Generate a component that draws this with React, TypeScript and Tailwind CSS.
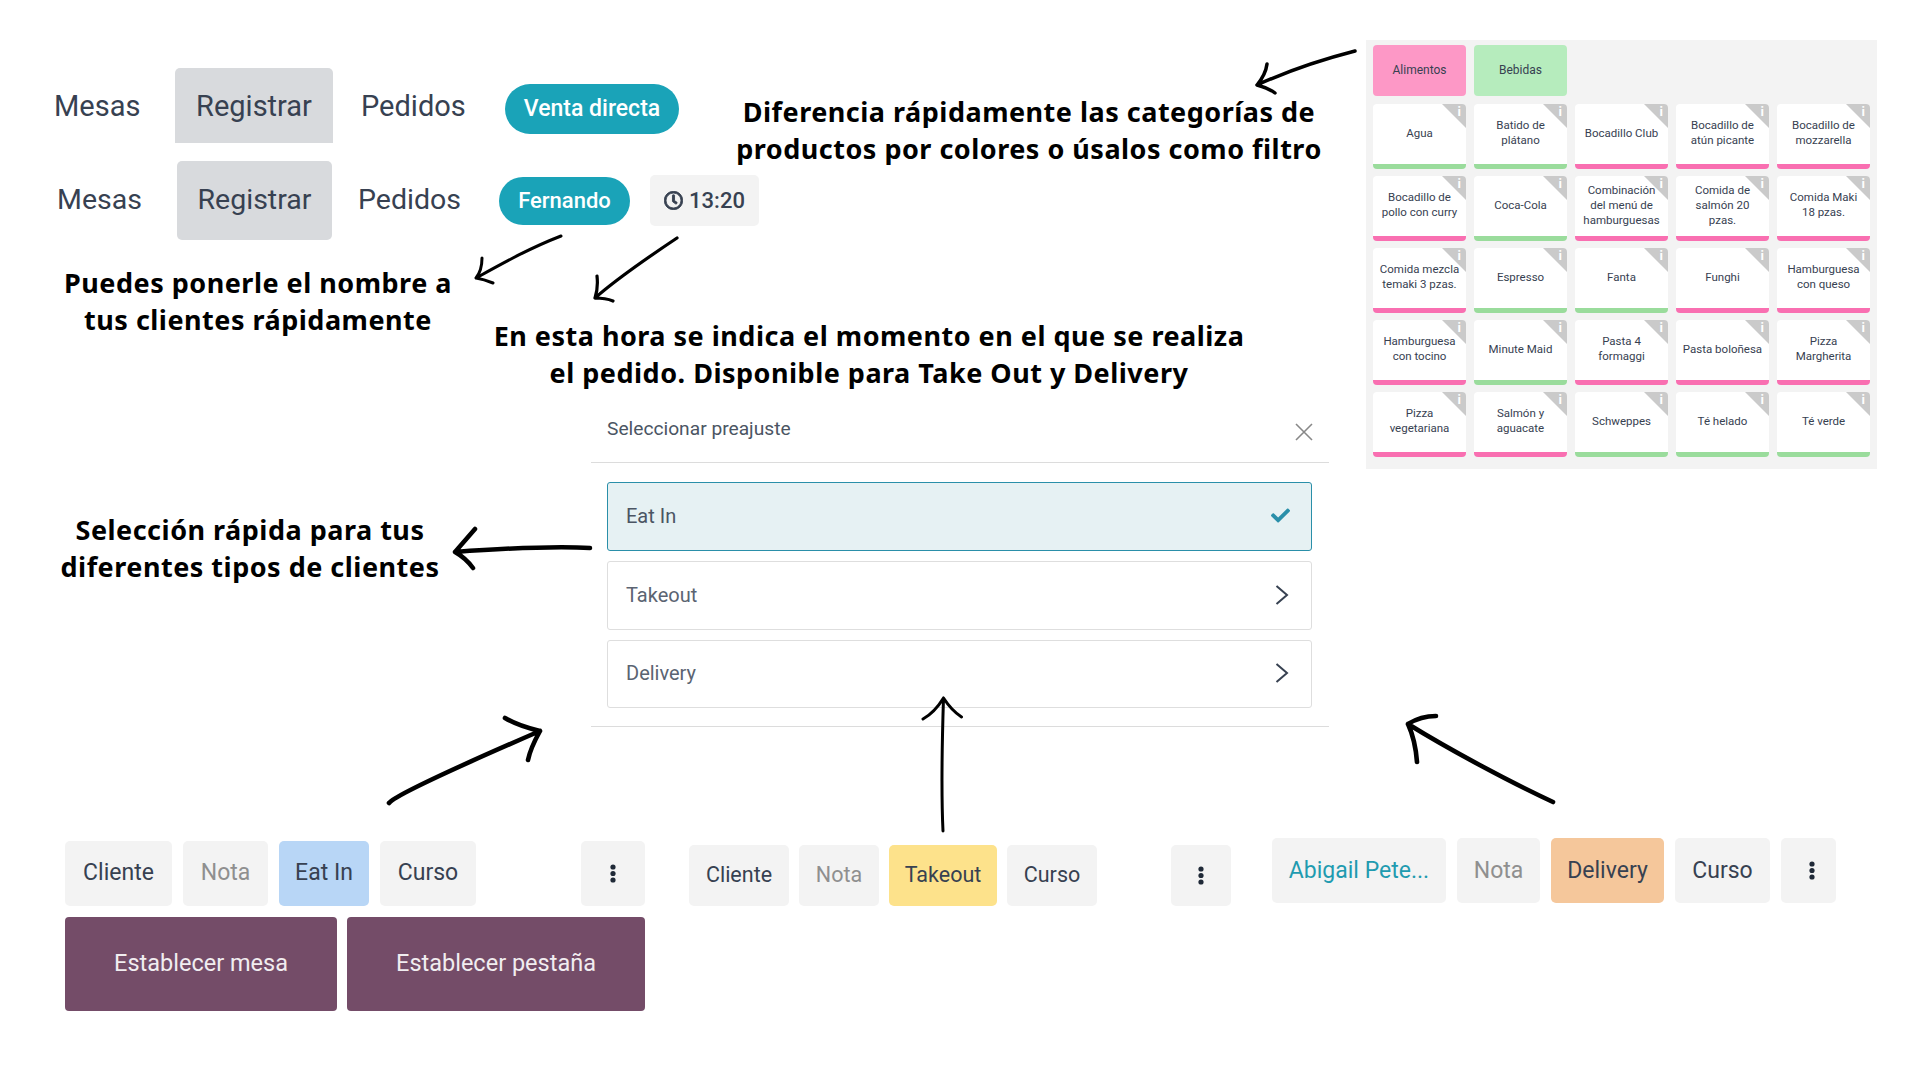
import { FaCheck, FaRegClock } from "react-icons/fa";

const roboto = "font-['Roboto',sans-serif]";
const note = "font-['Noto_Sans',sans-serif] font-bold text-black text-center text-[27px] tracking-[0.5px] leading-[37px] whitespace-nowrap absolute";

const pink = "border-b-[#f96fb1]";
const green = "border-b-[#9adc9c]";

const products = [
  { name: "Agua", color: green },
  { name: "Batido de\nplátano", color: green },
  { name: "Bocadillo Club", color: pink },
  { name: "Bocadillo de\natún picante", color: pink },
  { name: "Bocadillo de\nmozzarella", color: pink },
  { name: "Bocadillo de\npollo con curry", color: pink },
  { name: "Coca-Cola", color: green },
  { name: "Combinación\ndel menú de\nhamburguesas", color: pink },
  { name: "Comida de\nsalmón 20\npzas.", color: pink },
  { name: "Comida Maki\n18 pzas.", color: pink },
  { name: "Comida mezcla\ntemaki 3 pzas.", color: pink },
  { name: "Espresso", color: green },
  { name: "Fanta", color: green },
  { name: "Funghi", color: pink },
  { name: "Hamburguesa\ncon queso", color: pink },
  { name: "Hamburguesa\ncon tocino", color: pink },
  { name: "Minute Maid", color: green },
  { name: "Pasta 4\nformaggi", color: pink },
  { name: "Pasta boloñesa", color: pink },
  { name: "Pizza\nMargherita", color: pink },
  { name: "Pizza\nvegetariana", color: pink },
  { name: "Salmón y\naguacate", color: pink },
  { name: "Schweppes", color: green },
  { name: "Té helado", color: green },
  { name: "Té verde", color: green },
];

// hand drawn arrows: shaft + head
const arrows = [
  { d: "M1355 51 C1320 60 1290 70 1257 85 M1267 64 C1266 72 1262 79 1257 85 C1264 87 1270 89 1275 93", w: 3.5 },
  { d: "M590 548 C560 546 510 548 455 552 M475 529 C468 537 461 545 455 552 C462 556 468 561 473 568", w: 4.5 },
  { d: "M561 236 C530 248 505 262 476 278 M482 258 C482 266 480 273 476 278 C482 279 488 281 493 283", w: 3 },
  { d: "M677 238 C650 256 620 276 595 298 M597 276 C598 285 597 292 595 298 C602 298 608 299 613 301", w: 3.2 },
  { d: "M389 803 C395 795 480 757 540 731 M505 718 C515 724 527 728 540 731 C535 740 530 750 528 760", w: 4.6 },
  { d: "M943 831 C941 790 942 745 943.5 698 M923 719 C932 714 938 707 943.5 698 C948 705 954 712 961.5 717", w: 3 },
  { d: "M1553 802 C1510 782 1450 750 1408 724 M1436 716 C1426 716 1416 719 1408 724 C1413 735 1416 748 1417 762", w: 4.6 },
];

function Kebab() {
  return (
    <svg width="6" height="19" viewBox="0 0 6 19" fill="#1f2937">
      <circle cx="3" cy="3" r="2.6" />
      <circle cx="3" cy="9.5" r="2.6" />
      <circle cx="3" cy="16" r="2.6" />
    </svg>
  );
}

function Chevron() {
  return (
    <svg width="14" height="20" viewBox="0 0 14 20" fill="none" stroke="#374151" strokeWidth="2">
      <path d="M1.5 1 L12 10 L1.5 19" />
    </svg>
  );
}

function ToolBtn({ label, className }: { label: string; className: string }) {
  return <div className={`flex items-center justify-center rounded-[5px] ${className}`}>{label}</div>;
}

function Product({ name, color }: { name: string; color: string }) {
  return (
    <div className={`relative h-[65px] rounded-[4px] bg-white border-b-[5px] ${color} flex items-center justify-center pb-[2px] text-center text-[11.5px] leading-[15px] text-[#374151] whitespace-pre-line`}>
      <div className="absolute top-0 right-0 w-[24px] h-[24px] rounded-tr-[4px] bg-[#cacaca] [clip-path:polygon(0_0,100%_0,100%_100%)]" />
      <span className="absolute top-[1px] right-[5px] text-[13px] leading-[14px] font-bold text-white">i</span>
      <span>{name}</span>
    </div>
  );
}

export default function App() {
  return (
    <div className={`relative w-[1920px] h-[1080px] overflow-hidden bg-white text-[#374151] ${roboto}`}>
      {/* top nav, venta directa */}
      <div className="absolute left-[54px] top-[68px] h-[75px] flex items-center text-[29px]">
        <span className="w-[121px] pt-[2px]">Mesas</span>
        <div className="w-[158px] h-[75px] pt-[2px] rounded-t-[5px] bg-[#d8dadd] flex items-center justify-center">Registrar</div>
        <span className="ml-[28px] w-[103px] pt-[2px] whitespace-nowrap">Pedidos</span>
        <div className="ml-[41px] mt-[7px] w-[174px] h-[50px] rounded-full bg-[#1aa3b8] text-white text-[23px] font-medium flex items-center justify-center">Venta directa</div>
      </div>

      {/* top nav, named customer */}
      <div className="absolute left-[57px] top-[161px] h-[79px] flex items-center text-[28.5px]">
        <span className="w-[120px]">Mesas</span>
        <div className="w-[155px] h-[79px] rounded-[5px] bg-[#d8dadd] flex items-center justify-center">Registrar</div>
        <span className="ml-[26px] w-[101px] whitespace-nowrap">Pedidos</span>
        <div className="ml-[40px] w-[131px] h-[48px] rounded-full bg-[#1aa3b8] text-white text-[22px] font-medium flex items-center justify-center">Fernando</div>
        <div className="ml-[20px] w-[109px] h-[51px] rounded-[5px] bg-[#f3f3f3] text-[22px] font-medium flex items-center justify-center gap-[6px]">
          <FaRegClock size={19} stroke="currentColor" strokeWidth={24} />
          <span>13:20</span>
        </div>
      </div>

      {/* annotations */}
      <div className={`${note} left-[729px] w-[600px] top-[93px]`}>
        Diferencia rápidamente las categorías de
        <br />
        productos por colores o úsalos como filtro
      </div>
      <div className={`${note} left-[58px] w-[400px] top-[264px]`}>
        Puedes ponerle el nombre a
        <br />
        tus clientes rápidamente
      </div>
      <div className={`${note} left-[469px] w-[800px] top-[317px]`}>
        En esta hora se indica el momento en el que se realiza
        <br />
        el pedido. Disponible para Take Out y Delivery
      </div>
      <div className={`${note} left-[50px] w-[400px] top-[511px]`}>
        Selección rápida para tus
        <br />
        diferentes tipos de clientes
      </div>

      {/* product grid */}
      <div className="absolute left-[1366px] top-[40px] w-[511px] h-[429px] bg-[#f3f3f3] pl-[7px] pt-[5px]">
        <div className="flex gap-2 text-[12px] text-[#374151]">
          <div className="w-[93px] h-[51px] pb-[2px] rounded-[4px] bg-[#fd98c6] flex items-center justify-center">Alimentos</div>
          <div className="w-[93px] h-[51px] pb-[2px] rounded-[4px] bg-[#b6ecbd] flex items-center justify-center">Bebidas</div>
        </div>
        <div className="mt-2 w-[497px] grid grid-cols-5 gap-x-2 gap-y-[7px]">
          {products.map((p) => (
            <Product key={p.name} name={p.name} color={p.color} />
          ))}
        </div>
      </div>

      {/* preset dialog */}
      <div className="absolute left-[591px] top-[405px] w-[738px] text-[20px]">
        <div className="h-[58px] border-b border-[#dcdcdc] pl-[16px] pr-[16px] pb-[8px] flex items-center justify-between">
          <span className="text-[#4b5563] text-[19.2px]">Seleccionar preajuste</span>
          <svg width="18" height="18" viewBox="0 0 18 18" stroke="#888" strokeWidth="1.6" className="mt-[4px]">
            <path d="M1 1 L17 17 M17 1 L1 17" />
          </svg>
        </div>
        <div className="border-b border-[#dcdcdc] h-[264px] pl-[16px] pr-[17px] pt-[19px] flex flex-col gap-[10px]">
          <div className="h-[69px] pb-[2px] rounded-[3px] border border-[#2a8fa9] bg-[#e6f1f3] pl-[18px] pr-[21px] flex items-center justify-between text-[#4b5563]">
            <span>Eat In</span>
            <FaCheck size={19} className="text-[#2a8fa9]" />
          </div>
          <div className="h-[69px] pb-[2px] rounded-[3px] border border-[#dedede] pl-[18px] pr-[22px] flex items-center justify-between text-[#5b6472]">
            <span>Takeout</span>
            <Chevron />
          </div>
          <div className="h-[68px] pb-[2px] rounded-[3px] border border-[#dedede] pl-[18px] pr-[22px] flex items-center justify-between text-[#5b6472]">
            <span>Delivery</span>
            <Chevron />
          </div>
        </div>
      </div>

      {/* arrows */}
      <svg className="absolute inset-0 pointer-events-none" width="1920" height="1080" viewBox="0 0 1920 1080" fill="none" stroke="#000" strokeLinecap="round" strokeLinejoin="round">
        {arrows.map((a) => (
          <path key={a.d} d={a.d} strokeWidth={a.w} />
        ))}
      </svg>

      {/* eat in actions */}
      <div className="absolute left-[65px] top-[841px] w-[580px] flex flex-col gap-[11px]">
        <div className="flex h-[65px] gap-[11px] text-[23px]">
          <ToolBtn label="Cliente" className="w-[107px] bg-[#f3f3f3]" />
          <ToolBtn label="Nota" className="w-[85px] bg-[#f3f3f3] text-[#8f8f8f]" />
          <ToolBtn label="Eat In" className="w-[90px] bg-[#b8d6f6]" />
          <ToolBtn label="Curso" className="w-[96px] bg-[#f3f3f3]" />
          <div className="ml-auto w-[64px] rounded-[5px] bg-[#f3f3f3] flex items-center justify-center">
            <Kebab />
          </div>
        </div>
        <div className="flex h-[94px] gap-[10px] text-[23.5px] text-[#f1edf0]">
          <div className="w-[272px] rounded-[4px] bg-[#744c68] flex items-center justify-center">Establecer mesa</div>
          <div className="w-[298px] rounded-[4px] bg-[#744c68] flex items-center justify-center">Establecer pestaña</div>
        </div>
      </div>

      {/* takeout actions */}
      <div className="absolute left-[689px] top-[845px] w-[542px] h-[61px] flex gap-[10px] text-[21.5px]">
        <ToolBtn label="Cliente" className="w-[100px] bg-[#f3f3f3]" />
        <ToolBtn label="Nota" className="w-[80px] bg-[#f3f3f3] text-[#8f8f8f]" />
        <ToolBtn label="Takeout" className="w-[108px] bg-[#fde28b]" />
        <ToolBtn label="Curso" className="w-[90px] bg-[#f3f3f3]" />
        <div className="ml-auto w-[60px] rounded-[5px] bg-[#f3f3f3] flex items-center justify-center">
          <Kebab />
        </div>
      </div>

      {/* delivery actions */}
      <div className="absolute left-[1272px] top-[838px] w-[564px] h-[65px] flex gap-[11px] text-[23px]">
        <ToolBtn label="Abigail Pete..." className="w-[174px] bg-[#f3f3f3] text-[#1f9bb0] pt-[2px]" />
        <ToolBtn label="Nota" className="w-[83px] bg-[#f3f3f3] text-[#8f8f8f] pt-[2px]" />
        <ToolBtn label="Delivery" className="w-[113px] bg-[#f5c79b] pt-[2px]" />
        <ToolBtn label="Curso" className="w-[95px] bg-[#f3f3f3] pt-[2px]" />
        <div className="w-[55px] pl-[7px] rounded-[5px] bg-[#f3f3f3] flex items-center justify-center">
          <Kebab />
        </div>
      </div>
    </div>
  );
}
